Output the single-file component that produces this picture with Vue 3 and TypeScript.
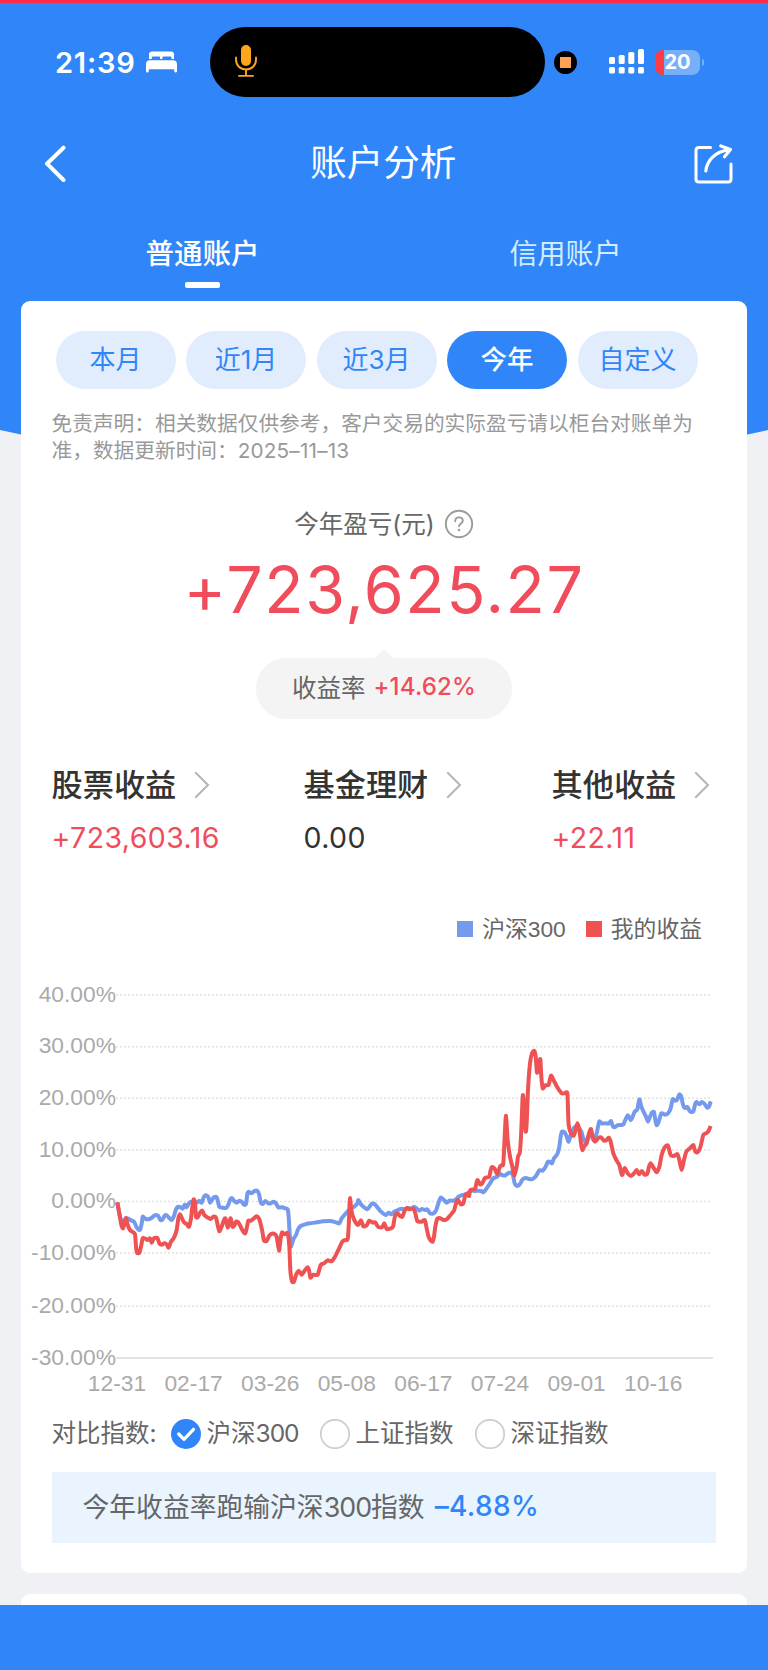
<script setup lang="ts">
import { ref } from 'vue'

interface Metric {
  title: string
  value: string
  gain: boolean
}

const tabs: string[] = ['普通账户', '信用账户']
const activeTab = ref<number>(0)

const ranges: string[] = ['本月', '近1月', '近3月', '今年', '自定义']
const activeRange = ref<number>(3)

const metrics: Metric[] = [
  { title: '股票收益', value: '+723,603.16', gain: true },
  { title: '基金理财', value: '0.00', gain: false },
  { title: '其他收益', value: '+22.11', gain: true },
]

const indices: { name: string; code: string }[] = [
  { name: '沪深', code: '300' },
  { name: '上证指数', code: '' },
  { name: '深证指数', code: '' },
]
const activeIndex = ref<number>(0)

const yTicks = [
  { label: '40.00%', y: 25 },
  { label: '30.00%', y: 76.7 },
  { label: '20.00%', y: 128.3 },
  { label: '10.00%', y: 180 },
  { label: '0.00%', y: 231.5 },
  { label: '-10.00%', y: 283 },
  { label: '-20.00%', y: 336.3 },
  { label: '-30.00%', y: 388 },
]
const xTicks = ['12-31', '02-17', '03-26', '05-08', '06-17', '07-24', '09-01', '10-16'].map(
  (label, i) => ({ label, x: 96 + i * 76.6 }),
)

// Each series is a flat x, y list sampled on a grid three times finer than the plot.
const benchmark: number[] = [
  292,697, 300,740, 310,760, 320,745, 328,748, 335,752, 342,755, 350,772, 356,779, 361,778, 366,755, 368,740,
  375,746, 385,748, 393,745, 400,739, 407,735, 415,738, 421,750, 428,748, 434,737, 440,736, 447,743, 455,750,
  462,738, 468,718, 475,710, 482,712, 488,716, 494,704, 500,712, 505,702, 513,695, 520,700, 530,698, 538,692,
  545,698, 552,680, 558,676, 565,682, 570,698, 577,688, 583,681, 590,682, 594,695, 598,711, 606,713, 618,714,
  624,706, 630,690, 635,684, 643,693, 650,698, 658,692, 666,696, 672,704, 678,702, 682,672, 686,665, 694,670,
  702,664, 711,662, 717,672, 722,697, 728,702, 736,693, 745,700, 752,700, 760,695, 768,700, 775,712, 785,712,
  796,715, 803,718, 806,740, 809,790, 812,830, 820,808, 828,795, 834,778, 842,768, 855,763, 870,760, 890,757,
  910,754, 930,753, 948,757, 958,760, 965,745, 975,733, 985,722, 995,715, 1005,708, 1012,700, 1015,690,
  1022,702, 1030,710, 1042,718, 1050,708, 1056,701, 1065,703, 1072,712, 1080,722, 1090,731, 1098,735,
  1106,728, 1114,733, 1124,724, 1134,720, 1144,716, 1154,718, 1164,714, 1174,716, 1182,710, 1190,716,
  1198,722, 1206,717, 1215,720, 1222,718, 1230,730, 1240,730, 1248,722, 1255,700, 1262,683, 1270,688,
  1280,698, 1288,692, 1298,692, 1308,688, 1316,680, 1324,676, 1335,674, 1345,668, 1355,662, 1365,663,
  1375,662, 1383,663, 1390,667, 1400,655, 1410,640, 1420,625, 1432,620, 1440,612, 1448,616, 1456,616,
  1464,610, 1474,608, 1480,620, 1484,640, 1492,648, 1500,642, 1508,628, 1518,624, 1528,627, 1538,627,
  1548,618, 1558,601, 1568,602, 1576,592, 1584,575, 1590,576, 1596,580, 1602,565, 1612,552, 1618,530,
  1622,500, 1626,485, 1634,487, 1640,500, 1646,515, 1652,495, 1658,480, 1666,470, 1676,474, 1684,485,
  1690,505, 1698,520, 1705,500, 1712,490, 1720,510, 1730,490, 1734,470, 1738,454, 1746,460, 1756,460,
  1766,460, 1773,453, 1778,468, 1784,472, 1792,466, 1800,465, 1810,463, 1818,445, 1824,436, 1832,450,
  1838,440, 1844,425, 1852,418, 1858,388, 1864,410, 1872,428, 1878,440, 1884,455, 1890,440, 1896,428,
  1902,426, 1906,450, 1910,466, 1916,455, 1924,430, 1934,434, 1944,430, 1952,415, 1958,388, 1966,392,
  1972,388, 1978,373, 1984,380, 1988,400, 1994,414, 2002,411, 2010,424, 2020,424, 2026,400, 2030,396,
  2038,403, 2046,396, 2054,402, 2062,413, 2068,408, 2072,394,
]
const portfolio: number[] = [
  292,697, 298,730, 304,765, 309,775, 314,755, 318,744, 323,765, 330,780, 338,786, 345,793, 348,830, 351,848,
  358,848, 364,825, 368,805, 376,806, 383,810, 390,805, 395,818, 402,805, 412,804, 418,820, 425,824, 433,820,
  440,823, 446,833, 453,815, 462,803, 470,780, 475,745, 480,733, 486,745, 492,757, 500,762, 507,770, 513,745,
  517,710, 521,688, 525,700, 528,740, 533,742, 540,728, 547,722, 553,735, 562,742, 572,747, 580,740, 588,743,
  593,765, 598,784, 605,770, 610,755, 616,745, 623,772, 628,758, 632,745, 638,770, 644,765, 648,755, 655,757,
  662,770, 668,782, 676,790, 681,770, 685,752, 693,752, 702,745, 710,739, 718,748, 724,770, 728,790, 732,812,
  740,813, 746,800, 752,793, 762,791, 770,800, 777,842, 782,805, 786,787, 794,793, 803,790, 808,830, 811,900,
  816,934, 822,935, 828,915, 836,902, 845,914, 852,905, 862,892, 867,900, 871,923, 880,914, 893,914, 902,885,
  912,880, 923,871, 935,874, 945,860, 956,838, 967,815, 975,810, 983,808, 986,770, 988,720, 990,684, 994,720,
  1002,748, 1014,765, 1023,751, 1030,769, 1040,766, 1048,752, 1058,758, 1066,757, 1074,770, 1086,772,
  1093,760, 1100,777, 1110,776, 1119,770, 1125,738, 1132,730, 1140,738, 1147,740, 1154,722, 1161,714,
  1170,718, 1180,716, 1186,730, 1192,753, 1204,755, 1214,750, 1219,770, 1225,798, 1231,810, 1238,815,
  1242,800, 1246,770, 1252,746, 1262,745, 1270,750, 1280,748, 1290,737, 1302,722, 1308,700, 1314,690,
  1322,703, 1330,700, 1336,675, 1342,672, 1347,678, 1351,660, 1360,658, 1366,655, 1372,630, 1380,643,
  1387,640, 1394,625, 1402,622, 1408,620, 1412,600, 1416,591, 1424,596, 1432,612, 1440,590, 1446,585,
  1450,580, 1454,500, 1458,437, 1463,510, 1470,560, 1477,590, 1483,618, 1490,590, 1494,560, 1500,545,
  1504,480, 1507,400, 1509,375, 1513,420, 1517,484, 1520,460, 1524,360, 1530,280, 1536,250, 1543,243,
  1547,260, 1551,308, 1556,285, 1561,268, 1564,320, 1568,355, 1576,346, 1586,344, 1593,317, 1602,333,
  1612,352, 1624,369, 1633,370, 1642,369, 1644,420, 1646,465, 1652,488, 1661,497, 1667,480, 1672,460,
  1678,480, 1683,520, 1687,540, 1693,528, 1700,520, 1707,490, 1713,477, 1718,500, 1725,515, 1735,504,
  1743,502, 1752,512, 1760,510, 1766,503, 1772,515, 1780,550, 1790,572, 1798,585, 1806,615, 1814,594,
  1823,610, 1833,618, 1842,610, 1850,600, 1857,613, 1865,603, 1874,614, 1882,611, 1887,590, 1892,580,
  1900,592, 1910,607, 1918,590, 1925,555, 1934,532, 1944,527, 1952,555, 1962,558, 1972,552, 1978,570,
  1985,600, 1992,570, 1999,545, 2010,535, 2020,525, 2026,545, 2034,546, 2042,528, 2050,495, 2060,489,
  2066,482, 2072,468,
]

/** Turns a flat coordinate list into a gently smoothed path. */
function toPath(flat: number[]): string {
  const pts: [number, number][] = []
  for (let i = 0; i < flat.length; i += 2) pts.push([flat[i] / 3 - 1, flat[i + 1] / 3])
  const f = (n: number) => n.toFixed(2)
  let d = `M${f(pts[0][0])} ${f(pts[0][1])}`
  for (let i = 0; i < pts.length - 1; i++) {
    const p0 = pts[Math.max(i - 1, 0)]
    const p1 = pts[i]
    const p2 = pts[i + 1]
    const p3 = pts[Math.min(i + 2, pts.length - 1)]
    const k = 0.12
    d += `C${f(p1[0] + (p2[0] - p0[0]) * k)} ${f(p1[1] + (p2[1] - p0[1]) * k)} ${f(p2[0] - (p3[0] - p1[0]) * k)} ${f(p2[1] - (p3[1] - p1[1]) * k)} ${f(p2[0])} ${f(p2[1])}`
  }
  return d
}

const benchmarkPath = toPath(benchmark)
const portfolioPath = toPath(portfolio)
</script>

<template>
  <div class="screen" lang="zh-CN">
    <svg class="backdrop" viewBox="0 0 768 480" aria-hidden="true">
      <path d="M0 0H768V430Q384 516 0 430Z" fill="#3086f8" />
    </svg>

    <div class="content">
      <div class="record-line"></div>

      <header class="status">
        <span class="clock">21:39</span>
        <svg class="bed" width="31" height="22" viewBox="0 0 31 22" fill="#fff">
          <path d="M3 8V3.5Q3 .5 6 .5H25Q28 .5 28 3.5V8H25.5V6.6Q25.5 5.6 24.5 5.6H17.6Q16.4 5.6 16.4 6.6V8H14.1V6.6Q14.1 5.6 13 5.6H7Q5.8 5.6 5.8 6.6V8Z" />
          <path d="M0 13Q0 9.2 4 9.2H27Q31 9.2 31 13V20.3Q31 21.4 29.9 21.4H29.3Q28.2 21.4 28.2 20.3V18.2H2.8V20.3Q2.8 21.4 1.7 21.4H1.1Q0 21.4 0 20.3Z" />
        </svg>
        <div class="island">
          <svg width="24" height="34" viewBox="0 0 24 34" fill="none" stroke="#fea41d" stroke-width="1.9" stroke-linecap="round">
            <rect x="7" y="1" width="10" height="21" rx="5" fill="#fea41d" stroke="none" />
            <path d="M2 13.5V15.5C2 21.5 6.3 25.4 12 25.4S22 21.5 22 15.5V13.5M12 25.4V31.5M5 31.9H19" />
          </svg>
        </div>
        <div class="rec"><i></i></div>
        <svg class="signal" width="36" height="26" viewBox="0 0 36 26" fill="#fff">
          <rect x="0" y="8" width="6" height="7" rx="1.6" /><rect x="9.7" y="6" width="6" height="9" rx="1.6" />
          <rect x="19.3" y="3" width="6" height="12" rx="1.6" /><rect x="29" y="0" width="6" height="15" rx="1.6" />
          <rect x="0" y="18" width="6" height="6.6" rx="1.6" /><rect x="9.7" y="18" width="6" height="6.6" rx="1.6" />
          <rect x="19.3" y="18" width="6" height="6.6" rx="1.6" /><rect x="29" y="18" width="6" height="6.6" rx="1.6" />
        </svg>
        <div class="battery"><span>20</span></div>
        <i class="nub"></i>
      </header>

      <nav class="titlebar">
        <svg width="24" height="38" viewBox="0 0 24 38" fill="none" stroke="#fff" stroke-width="4" stroke-linecap="round" stroke-linejoin="round">
          <path d="M20.5 2.7L4 18.7L20.5 35" />
        </svg>
        <h1>账户分析</h1>
        <svg width="40" height="42" viewBox="0 0 40 42" fill="none" stroke="#fff" stroke-width="3.2" stroke-linecap="round" stroke-linejoin="round">
          <path d="M17.5 4.5H6Q3 4.5 3 7.5V36Q3 39 6 39H35Q38 39 38 36V21" stroke-width="3" />
          <path d="M12.8 28C14 18 21 8.8 36.5 6.6M27.8 3L37.5 6.4L31.5 13.8" />
        </svg>
      </nav>

      <div class="tabs">
        <button v-for="(tab, i) in tabs" :key="tab" class="tab" :class="{ active: i === activeTab }" @click="activeTab = i">
          {{ tab }}
        </button>
      </div>

      <main class="card">
        <div class="ranges">
          <button v-for="(r, i) in ranges" :key="r" class="pill" :class="{ active: i === activeRange }" @click="activeRange = i">
            {{ r }}
          </button>
        </div>

        <p class="notice">免责声明：相关数据仅供参考，客户交易的实际盈亏请以柜台对账单为准，数据更新时间：<span class="date">2025–11–13</span></p>

        <div class="profit-label">
          <span>今年盈亏(元)</span>
          <svg width="30" height="30" viewBox="0 0 30 30" fill="none" stroke="#9b9b9b" stroke-width="1.9" stroke-linecap="round">
            <circle cx="15" cy="15" r="13.2" />
            <path d="M11.2 12.2C11.2 9.8 12.7 8.4 15 8.4S18.8 9.8 18.8 11.8C18.8 14.2 15 14.7 15 17.3" />
            <circle cx="15" cy="21" r="1.3" fill="#9b9b9b" stroke="none" />
          </svg>
        </div>
        <div class="profit">+723,625.27</div>
        <div class="bubble"><span>收益率</span><b>+14.62%</b></div>

        <section class="metrics">
          <div v-for="m in metrics" :key="m.title" class="metric">
            <div class="metric-title">
              <span>{{ m.title }}</span>
              <svg width="16" height="28" viewBox="0 0 16 28" fill="none" stroke="#b5b5b5" stroke-width="2">
                <path d="M1.2 1.2L14 14L1.2 26.8" />
              </svg>
            </div>
            <div class="metric-value" :class="{ gain: m.gain }">{{ m.value }}</div>
          </div>
        </section>

        <div class="legend">
          <i class="blue"></i><span>沪深300</span><i class="red"></i><span>我的收益</span>
        </div>

        <svg class="chart" width="726" height="430" viewBox="0 0 726 430">
          <g v-for="(t, i) in yTicks" :key="t.label">
            <line v-if="i < 7" x1="95" :y1="t.y" x2="690" :y2="t.y" class="grid" />
            <line v-else x1="95" :y1="t.y" x2="692" :y2="t.y" class="axis" />
            <text x="95" :y="t.y + 6.5" text-anchor="end">{{ t.label }}</text>
          </g>
          <text v-for="t in xTicks" :key="t.label" :x="t.x" y="421" text-anchor="middle">{{ t.label }}</text>
          <path :d="benchmarkPath" class="line" stroke="#7599ed" />
          <path :d="portfolioPath" class="line" stroke="#ee5253" />
        </svg>

        <div class="compare">
          <span class="compare-label">对比指数:</span>
          <label v-for="(item, i) in indices" :key="item.name" class="option" @click="activeIndex = i">
            <svg width="30" height="30" viewBox="0 0 30 30" fill="none">
              <template v-if="i === activeIndex">
                <circle cx="15" cy="15" r="15" fill="#3086f8" />
                <path d="M7.7 15L13 20.3L22.5 10.3" stroke="#fff" stroke-width="3.2" stroke-linecap="round" stroke-linejoin="round" />
              </template>
              <circle v-else cx="15" cy="15" r="14.2" fill="#fff" stroke="#cfcfcf" stroke-width="1.8" />
            </svg>
            <span class="option-name">{{ item.name }}<span v-if="item.code" class="digits">{{ item.code }}</span></span>
          </label>
        </div>

        <div class="summary">
          <span class="summary-text">今年收益率跑输沪深<span class="digits">300</span>指数</span><b>–4.88%</b>
        </div>
      </main>

      <div class="next-card"></div>
      <footer class="bottom"></footer>
    </div>
  </div>
</template>

<style>
body {
  margin: 0;
}
</style>

<style scoped>
* {
  box-sizing: border-box;
}
.screen {
  position: relative;
  width: 768px;
  height: 1670px;
  overflow: hidden;
  background: #eff1f4;
  font-family: Inter, "Noto Sans CJK SC", sans-serif;
  font-weight: 400;
  color: #666;
}
.backdrop {
  position: absolute;
  top: 0;
  left: 0;
  width: 768px;
  height: 480px;
}
.content {
  position: relative;
  display: flex;
  flex-direction: column;
  height: 1670px;
}
button {
  border: 0;
  padding: 0;
  background: none;
  font: inherit;
}
svg {
  display: block;
  flex: none;
}
.digits {
  letter-spacing: -1px;
}
.record-line {
  height: 3px;
  background: #fb2b49;
}
.status {
  display: flex;
  align-items: center;
  height: 118px;
  padding-left: 55px;
}
.clock {
  width: 91px;
  font-size: 29px;
  font-weight: 600;
  letter-spacing: 0.8px;
  color: #fff;
  white-space: nowrap;
}
.bed {
  margin-right: 33px;
}
.island {
  display: flex;
  align-items: center;
  width: 334.5px;
  height: 70px;
  padding-left: 24px;
  border-radius: 35px;
  background: #000;
}
.island svg {
  margin-top: -3px;
}
.rec {
  display: flex;
  align-items: center;
  justify-content: center;
  width: 23px;
  height: 23px;
  margin: 0 32px 0 9.5px;
  border-radius: 50%;
  background: #000;
}
.rec i {
  width: 11px;
  height: 11px;
  background: #ffa057;
}
.signal {
  margin-right: 10px;
}
.battery {
  width: 45px;
  height: 25px;
  border-radius: 8px;
  background: linear-gradient(90deg, #fd3d45 9px, #77aff9 9px);
  color: #fff;
  font-size: 20px;
  line-height: 25px;
  font-weight: 700;
  text-align: center;
}
.nub {
  width: 2px;
  height: 7px;
  margin-left: 2px;
  border-radius: 0 3px 3px 0;
  background: #77aff9;
}
.titlebar {
  display: flex;
  align-items: center;
  justify-content: space-between;
  height: 86px;
  padding: 0 35.5px 0 43px;
}
.titlebar h1 {
  margin: 0 0 7px 7px;
  color: #fff;
  font-size: 36.5px;
  font-weight: 400;
}
.tabs {
  display: flex;
  height: 94px;
  padding: 0 21px;
}
.tab {
  display: flex;
  flex: 1;
  flex-direction: column;
  align-items: center;
  padding-top: 26px;
  color: #d0ecff;
  font-size: 28px;
  line-height: 42px;
}
.tab.active {
  color: #fff;
  font-size: 28.5px;
  font-weight: 500;
}
.tab.active::after {
  content: "";
  width: 35px;
  height: 6px;
  margin-top: 7px;
  border-radius: 2px;
  background: #fff;
}
.card {
  flex: none;
  display: flex;
  flex-direction: column;
  width: 726px;
  height: 1272px;
  margin-left: 21px;
  padding-top: 30px;
  border-radius: 9px;
  background: #fff;
}
.ranges {
  display: flex;
  gap: 10.5px;
  margin-left: 34.5px;
}
.pill {
  width: 120px;
  height: 57.5px;
  border-radius: 29px;
  background: #e1ecfd;
  color: #3086f8;
  font-size: 26px;
  line-height: 57.5px;
}
.pill.active {
  background: #3086f8;
  color: #fff;
  font-size: 26.5px;
  font-weight: 500;
}
.notice {
  width: 665px;
  height: 54px;
  margin: 21.5px 0 0 30.5px;
  color: #999;
  font-size: 20.7px;
  line-height: 27px;
}
.date {
  letter-spacing: 0.2px;
}
.profit-label {
  display: flex;
  align-items: center;
  justify-content: center;
  gap: 9px;
  height: 40px;
  margin-top: 40px;
  font-size: 24.5px;
}
.profit-label span {
  margin-bottom: 3px;
}
.profit {
  height: 80px;
  margin-top: 6px;
  color: #f04c5c;
  font-size: 64.5px;
  line-height: 80px;
  font-weight: 400;
  text-align: center;
  letter-spacing: 1.6px;
}
.bubble {
  position: relative;
  display: flex;
  align-items: center;
  justify-content: center;
  gap: 8px;
  width: 256px;
  height: 60.5px;
  margin: 28px auto 0;
  padding-bottom: 3px;
  border-radius: 30px;
  background: #f5f4f5;
  font-size: 24.5px;
}
.bubble::before {
  content: "";
  position: absolute;
  top: -9px;
  left: 117px;
  width: 22px;
  height: 10px;
  background: #f5f4f5;
  clip-path: polygon(50% 0, 100% 100%, 0 100%);
}
.bubble b {
  color: #f04c5c;
  font-size: 24px;
  font-weight: 500;
  letter-spacing: 0.2px;
}
.metrics {
  display: grid;
  grid-template-columns: 252px 248px 1fr;
  margin: 42px 0 0 30.5px;
}
.metric-title {
  display: flex;
  align-items: center;
  gap: 18px;
  height: 48px;
  color: #333;
  font-size: 31.2px;
  font-weight: 500;
}
.metric-title span {
  margin-bottom: 4px;
}
.metric-value {
  height: 40px;
  margin-top: 9px;
  color: #333;
  font-size: 28.5px;
  line-height: 40px;
  font-weight: 400;
  letter-spacing: 0.4px;
}
.metric-value.gain {
  color: #f04c5c;
}
.legend {
  display: flex;
  align-items: center;
  justify-content: flex-end;
  height: 34px;
  margin-top: 54px;
  padding-right: 45px;
  font-family: "Liberation Sans", "Noto Sans CJK SC", sans-serif;
  font-size: 22.8px;
}
.legend span {
  margin-bottom: 2px;
}
.legend i {
  width: 16px;
  height: 16px;
  margin-right: 9px;
}
.legend .blue {
  background: #7599ed;
}
.legend .red {
  margin-left: 20px;
  background: #ee5253;
}
.chart {
  margin-top: 24px;
}
.chart text {
  fill: #aaa;
  font-family: "Liberation Sans", sans-serif;
  font-size: 22.8px;
}
.grid {
  stroke: #e2e2e2;
  stroke-width: 1.4;
  stroke-dasharray: 2 2;
}
.axis {
  stroke: #e4e4e4;
  stroke-width: 2;
}
.line {
  fill: none;
  stroke-width: 4;
  stroke-linejoin: round;
}
.compare {
  display: flex;
  align-items: center;
  height: 50px;
  margin: 9px 0 0 30.5px;
  font-size: 24.5px;
  white-space: nowrap;
}
.compare-label {
  width: 119px;
  margin-bottom: 4px;
}
.option {
  display: flex;
  align-items: center;
  gap: 6px;
  margin-right: 21px;
}
.option-name {
  margin-bottom: 4px;
}
.summary {
  display: flex;
  align-items: center;
  gap: 10px;
  width: 664px;
  height: 71px;
  margin: 13px 0 0 30.5px;
  padding-left: 31px;
  background: #eaf4ff;
  font-size: 26.8px;
}
.summary-text {
  margin-bottom: 4px;
}
.summary b {
  margin-bottom: 2px;
  color: #3086f8;
  font-size: 28px;
  font-weight: 500;
  letter-spacing: 0.4px;
}
.next-card {
  flex: none;
  width: 726px;
  height: 11px;
  margin: 21px 0 0 21px;
  border-radius: 9px 9px 0 0;
  background: #fff;
}
.bottom {
  flex: none;
  height: 65px;
  background: #3086f8;
}
</style>
